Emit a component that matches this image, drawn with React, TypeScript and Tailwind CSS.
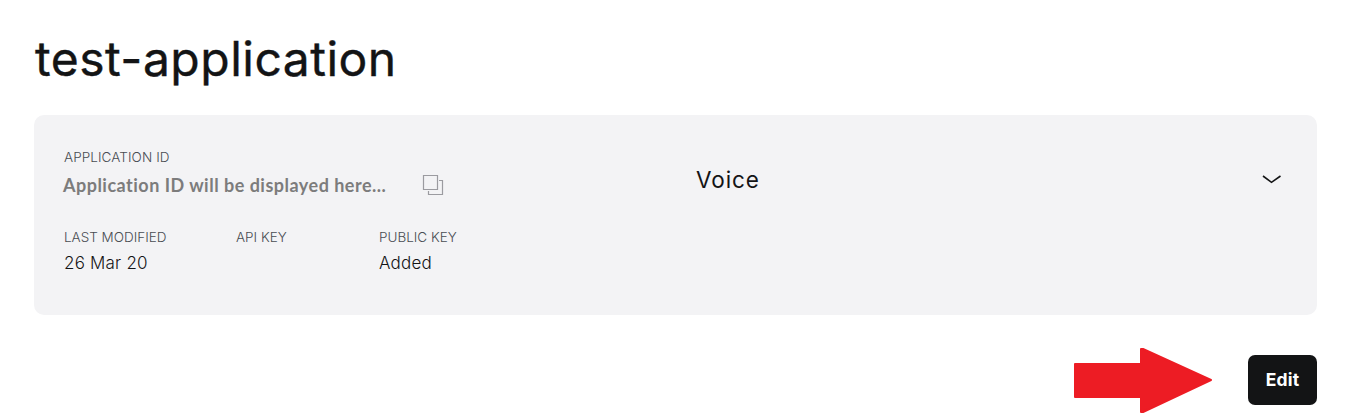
import React from "react";

function Field({ label, value, className }: { label: string; value?: string; className: string }) {
  return (
    <div className={className}>
      <div className="h-5 text-[13.5px] font-light leading-5 text-[#484c52]">{label}</div>
      <div className="mt-1 h-6 text-[17px] font-light leading-6 tracking-[0.2px] text-[#131415]">{value}</div>
    </div>
  );
}

function CopyIcon() {
  return (
    <svg className="-mt-0.5" width="22" height="22" viewBox="0 0 22 22" fill="none" stroke="#9b9ba0" strokeWidth="1.2" aria-hidden="true">
      <path d="M1.5 1.5H15.5V15.5H1.5Z" />
      <path d="M17 6.5H20.5V20.5H6.5V17" />
    </svg>
  );
}

export default function App() {
  return (
    <main className="h-[420px] w-[1352px] overflow-hidden bg-white pl-[34px] pr-[35px] pt-[29px] font-['Inter',sans-serif] text-[#131415]">
      <h1 className="h-[60px] whitespace-nowrap pl-px text-[48px] font-normal leading-[60px] tracking-[0.5px] [-webkit-text-stroke:0.4px_#131415]">test-application</h1>

      <section className="mt-[26px] flex h-[200px] rounded-[10px] bg-[#f3f3f5]">
        <div className="w-[662px] pl-[30px] pt-8">
          <div className="h-5 text-[13.5px] font-light leading-5 tracking-[0.08px] text-[#484c52]">APPLICATION ID</div>
          <div className="-ml-px mt-[7px] flex h-6 items-center">
            <span className="-mt-0.5 w-[359px] whitespace-nowrap font-['Lato',sans-serif] text-[18px] font-bold tracking-[0.49px] text-[#7c7c7c] [font-variant-ligatures:none]">
              Application ID will be displayed here...
            </span>
            <CopyIcon />
          </div>
          <div className="mt-[29px] flex">
            <Field label="LAST MODIFIED" value="26 Mar 20" className="w-[172px]" />
            <Field label="API KEY" className="w-[143px]" />
            <Field label="PUBLIC KEY" value="Added" className="w-[120px]" />
          </div>
        </div>
        <div className="mt-12 flex h-8 flex-1 items-center justify-between pr-[35px]">
          <span className="pt-0.5 text-[22.5px] tracking-[0.9px]">Voice</span>
          <svg className="mt-0.5" width="20" height="10" viewBox="0 0 20 10" fill="none" stroke="#131415" strokeWidth="1.6" aria-hidden="true">
            <path d="M1 1L9.5 7.3L18.5 1" />
          </svg>
        </div>
      </section>

      <div className="mt-[33px] flex h-[65px] justify-end">
        <svg width="140" height="65" viewBox="0 0 140 65" fill="#ed1c24" stroke="#ed1c24" strokeWidth="2" strokeLinejoin="round" aria-hidden="true">
          <path d="M2 16H68V1H70L138 32L70 64H68V49H2Z" />
        </svg>
        <button className="ml-[35px] mt-[7px] h-[50px] w-[69px] rounded-[7px] bg-[#131415] text-[17.5px] font-bold tracking-[0.2px] text-white">
          Edit
        </button>
      </div>
    </main>
  );
}
